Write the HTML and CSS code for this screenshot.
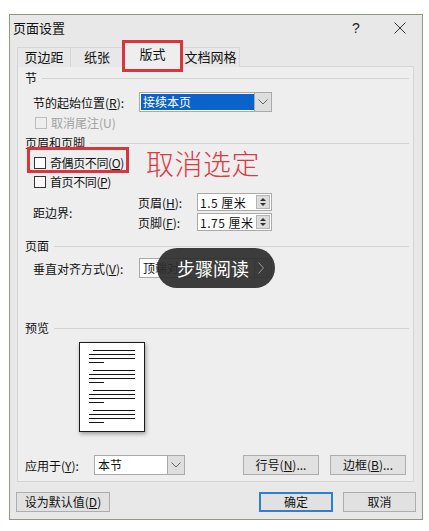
FILE: index.html
```html
<!DOCTYPE html>
<html lang="zh-CN">
<head>
    <meta charset="UTF-8">
    <title>页面设置</title>
    <link rel="stylesheet" href="styles.css">
</head>
<body>
    <div class="dialog">
        <div class="titlebar">
            <span class="title">页面设置</span>
            <span class="help">?</span>
            <span class="close">
                <svg width="12" height="12" viewBox="0 0 12 12"><path d="M0.5 0.5 L11.5 11.5 M11.5 0.5 L0.5 11.5" stroke="#333" stroke-width="1" fill="none"/></svg>
            </span>
        </div>

        <div class="tabs">
            <div class="tab t1">页边距</div>
            <div class="tab t2">纸张</div>
            <div class="tab active">版式<span class="mark tab-mark"></span></div>
            <div class="tab t4">文档网格</div>
        </div>

        <div class="panel">
            <div class="grp-title">节</div>
            <div class="row r-start">
                <span class="lbl w106">节的起始位置(<u>R</u>):</span>
                <div class="select s-start">
                    <span class="sel-text hl">接续本页</span>
                    <span class="drop"><svg width="10" height="6" viewBox="0 0 10 6"><polyline points="0.5,0.5 5,5 9.5,0.5" fill="none" stroke="#666"/></svg></span>
                </div>
            </div>
            <div class="row chk-row r-endnote disabled">
                <span class="chk"></span><span>取消尾注(U)</span>
            </div>

            <div class="grp-title t-header">页眉和页脚</div>
            <div class="row chk-row r-odd">
                <span class="mark odd-mark"></span>
                <span class="chk"></span><span class="tight">奇偶页不同(<u>O</u>)</span>
                <span class="note">取消选定</span>
            </div>
            <div class="row chk-row r-first">
                <span class="chk"></span><span class="tight">首页不同(<u>P</u>)</span>
            </div>
            <div class="row r-margin">
                <span class="lbl w105">距边界:</span>
                <div class="spins">
                    <div class="spin-row">
                        <span class="lbl w59">页眉(<u>H</u>):</span>
                        <div class="spin"><span>1.5 厘米</span><span class="arrows"><i class="up"></i><i class="down"></i></span></div>
                    </div>
                    <div class="spin-row">
                        <span class="lbl w59">页脚(<u>F</u>):</span>
                        <div class="spin"><span>1.75 厘米</span><span class="arrows"><i class="up"></i><i class="down"></i></span></div>
                    </div>
                </div>
            </div>

            <div class="grp-title t-page">页面</div>
            <div class="row r-valign">
                <span class="lbl w106">垂直对齐方式(<u>V</u>):</span>
                <div class="select s-valign">
                    <span class="sel-text">顶端对齐</span>
                    <span class="drop"><svg width="10" height="6" viewBox="0 0 10 6"><polyline points="0.5,0.5 5,5 9.5,0.5" fill="none" stroke="#666"/></svg></span>
                </div>
            </div>

            <div class="grp-title t-preview">预览</div>
            <div class="preview">
                <svg width="64" height="88" viewBox="0 0 64 88">
                    <g stroke="#151515" stroke-width="1.2">
                        <path d="M13 7.5H55 M9 11.5H55 M9 15.5H55 M9 19.5H24"/>
                        <path d="M13 27.5H55 M9 31.5H55 M9 35.5H55 M9 39.5H24"/>
                        <path d="M13 47.5H55 M9 51.5H55 M9 55.5H55 M9 59.5H24"/>
                        <path d="M13 67.5H55 M9 71.5H55 M9 75.5H55 M9 79.5H24"/>
                    </g>
                </svg>
            </div>

            <div class="row r-apply">
                <span class="lbl w69">应用于(<u>Y</u>):</span>
                <div class="select s-apply">
                    <span class="sel-text">本节</span>
                    <span class="drop"><svg width="10" height="6" viewBox="0 0 10 6"><polyline points="0.5,0.5 5,5 9.5,0.5" fill="none" stroke="#666"/></svg></span>
                </div>
                <button class="btn b-line">行号(<u>N</u>)...</button>
                <button class="btn b-border">边框(<u>B</u>)...</button>
            </div>
        </div>

        <div class="footer">
            <button class="btn b-default">设为默认值(<u>D</u>)</button>
            <button class="btn b-ok">确定</button>
            <button class="btn b-cancel">取消</button>
        </div>
    </div>

    <div class="pill">步骤阅读
        <svg width="6" height="12" viewBox="0 0 6 12"><polyline points="0.5,0.5 5.5,6 0.5,11.5" fill="none" stroke="#9a9a9a" stroke-width="1"/></svg>
    </div>
</body>
</html>
```

FILE: styles.css
```css
* {
    box-sizing: border-box;
}
body {
    margin: 0;
    background: #ffffff;
    font-family: "Noto Sans CJK SC", "Liberation Sans", sans-serif;
    font-size: 12px;
    color: #111;
    position: relative;
    width: 429px;
    height: 531px;
    overflow: hidden;
}
u {
    text-decoration: underline;
}

.dialog {
    margin: 14px 0 0 9px;
    width: 414px;
    height: 506px;
    border: 1px solid #8d9b7a;
    background: #e8e8e8;
}

/* barra de titulo */
.titlebar {
    height: 25px;
    display: flex;
    align-items: center;
    padding-left: 3px;
    font-size: 13px;
}
.title {
    flex: 1;
}
.help {
    width: 30px;
    text-align: center;
    font-family: "Liberation Sans", sans-serif;
    font-size: 14px;
    color: #222;
}
.close {
    width: 44px;
    margin-left: 7px;
    display: flex;
    justify-content: center;
}

/* abas */
.tabs {
    height: 26px;
    display: flex;
    align-items: flex-end;
    padding-left: 7px;
    position: relative;
    z-index: 2;
}
.tab {
    height: 20px;
    line-height: 18px;
    text-align: center;
    font-size: 13px;
    border: 1px solid #d6d6d6;
    border-bottom: none;
    border-right: none;
    background: #e8e8e8;
    margin-bottom: -1px;
}
.t1 { width: 53px; }
.t2 { width: 53px; }
.t4 { width: 58px; border-right: 1px solid #d6d6d6; border-left: none; }
.tab.active {
    width: 59px;
    height: 27px;
    line-height: 26px;
    background: #eeeeee;
    position: relative;
    border-right: 1px solid #d6d6d6;
}

.mark {
    position: absolute;
    border: 3px solid #d8363c;
}
.tab-mark {
    left: -2px;
    top: -1px;
    width: 61px;
    height: 32px;
}

/* painel */
.panel {
    margin-left: 7px;
    width: 397px;
    height: 416px;
    border: 1px solid #d5d5d5;
    background: #eeeeee;
    padding: 4px 4px 0 7px;
}
.grp-title {
    height: 14px;
    display: flex;
    align-items: center;
    gap: 5px;
    line-height: 14px;
}
.grp-title::after {
    content: '';
    flex: 1;
    border-top: 1px solid #d2d2d2;
}
.row {
    display: flex;
    align-items: center;
}
.lbl {
    flex: none;
    white-space: nowrap;
}
.w106 { width: 106px; }
.w105 { width: 105px; }
.w69 { width: 69px; }
.w59 { width: 59px; }

.r-start { margin-top: 7px; height: 20px; padding-left: 8px; }
.r-endnote { margin-top: 4px; padding-left: 10px; }
.t-header { margin-top: 6px; }
.r-odd { margin-top: 6px; padding-left: 9px; position: relative; }
.r-first { margin-top: 5px; padding-left: 9px; }
.r-margin { margin-top: 4px; padding-left: 8px; }
.t-page { margin-top: 8px; }
.r-valign { margin-top: 5px; height: 20px; padding-left: 8px; }
.t-preview { margin-top: 43px; }
.r-apply { margin-top: 23px; height: 20px; padding-right: 3px; }

.chk-row {
    height: 14px;
    line-height: 14px;
    gap: 4px;
}
.tight {
    letter-spacing: -0.4px;
}
.chk {
    width: 12px;
    height: 12px;
    border: 1px solid #333;
    background: #fbfbfb;
}
.disabled {
    color: #a2a2a2;
}
.disabled .chk {
    border-color: #bdbdbd;
    background: #eeeeee;
}
.odd-mark {
    left: 2px;
    top: -9px;
    width: 102px;
    height: 26px;
}
.note {
    position: absolute;
    left: 121px;
    top: -9px;
    font-size: 28px;
    line-height: 32px;
    color: #df3a40;
    font-weight: 300;
    letter-spacing: 0.5px;
}

/* caixas de selecao */
.select {
    height: 20px;
    display: flex;
    border: 1px solid #a9a9a9;
    background: #ffffff;
    padding: 1px;
}
.s-start, .s-valign { width: 133px; }
.s-apply { width: 91px; }
.sel-text {
    flex: 1;
    line-height: 16px;
    padding-left: 2px;
}
.sel-text.hl {
    background: #0a63c9;
    color: #ffffff;
}
.drop {
    width: 18px;
    margin: -2px -2px -2px 0;
    border: 1px solid #a9a9a9;
    background: #dedede;
    display: flex;
    align-items: center;
    justify-content: center;
}

/* campos numericos */
.spins {
    display: flex;
    flex-direction: column;
    gap: 2px;
}
.spin-row {
    display: flex;
    align-items: center;
}
.spin {
    width: 75px;
    height: 18px;
    border: 1px solid #a9a9a9;
    background: #ffffff;
    display: flex;
    align-items: center;
    justify-content: space-between;
    padding: 0 1px 0 2px;
}
.spin span:first-child {
    letter-spacing: 0.5px;
}
.arrows {
    width: 14px;
    height: 14px;
    border: 1px solid #b4b4b4;
    background: #dcdcdc;
    display: flex;
    flex-direction: column;
    align-items: center;
    justify-content: center;
    gap: 2px;
}
.arrows i {
    width: 0;
    height: 0;
    border-left: 3px solid transparent;
    border-right: 3px solid transparent;
}
.arrows .up { border-bottom: 3px solid #333; }
.arrows .down { border-top: 3px solid #333; }

/* pre-visualizacao */
.preview {
    margin: 7px 0 0 54px;
    width: 66px;
    height: 90px;
    border: 1px solid #1a1a1a;
    background: #ffffff;
    box-shadow: 1px 2px 4px rgba(0, 0, 0, 0.35);
}
.preview svg {
    display: block;
}

/* botoes */
.btn {
    height: 20px;
    border: 1px solid #adadad;
    background: #e1e1e1;
    font-family: "Noto Sans CJK SC", sans-serif;
    font-size: 12px;
    color: #111;
    padding: 0;
    line-height: 16px;
}
.b-line {
    width: 76px;
    margin-left: auto;
}
.b-border {
    width: 76px;
    margin-left: 11px;
}

.footer {
    margin-top: 10px;
    display: flex;
    padding: 0 6px;
}
.b-default { width: 94px; }
.b-ok {
    width: 74px;
    margin-left: auto;
    border: 2px solid #2c7fd3;
}
.b-cancel {
    width: 73px;
    margin-left: 10px;
}

/* sobreposicao da pagina */
.pill {
    position: absolute;
    left: 157px;
    top: 248px;
    width: 118px;
    height: 40px;
    border-radius: 20px;
    background: rgba(45, 45, 45, 0.92);
    color: #ffffff;
    font-size: 18px;
    line-height: 40px;
    padding-left: 20px;
    display: flex;
    align-items: center;
    gap: 9px;
}
```
